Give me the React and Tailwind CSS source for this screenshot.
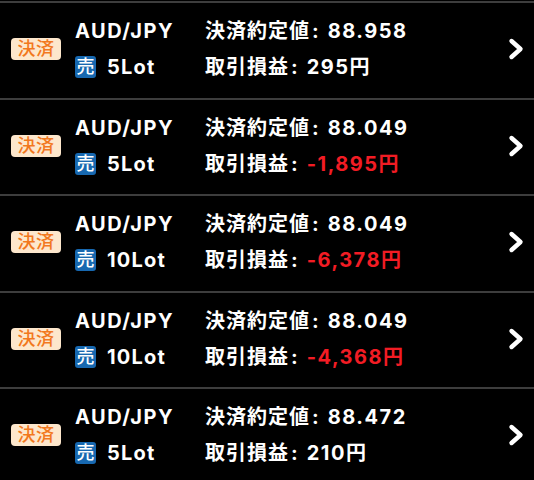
import React from "react";

const rows = [
  { lot: "5Lot", price: "88.958", pl: "295円", neg: false },
  { lot: "5Lot", price: "88.049", pl: "-1,895円", neg: true },
  { lot: "10Lot", price: "88.049", pl: "-6,378円", neg: true },
  { lot: "10Lot", price: "88.049", pl: "-4,368円", neg: true },
  { lot: "5Lot", price: "88.472", pl: "210円", neg: false },
];

const font = { fontFamily: 'Inter, "Noto Sans CJK JP", sans-serif' };

function Chevron() {
  return (
    <svg width="19" height="24" viewBox="0 0 19 24" className="block">
      <path d="M4.5 4 L13.5 12 L4.5 20" fill="none" stroke="white" strokeWidth="4.4" strokeLinecap="round" strokeLinejoin="round" />
    </svg>
  );
}

function Row({ r }) {
  return (
    <div className="h-[96.5px] border-t-2 border-[#3d3d3d] flex items-center pb-[2px]">
      <div className="shrink-0 ml-[11px] w-[50px] h-[22px] rounded-[4px] bg-[#fde7cc] text-[#f2781e] text-[18px] leading-[22px] flex items-center justify-center tracking-[0.5px] font-medium">
        決済
      </div>
      <div className="shrink-0 ml-[14px] w-[130px] flex flex-col">
        <div className="h-[36px] flex items-center text-white font-bold text-[20px] tracking-[1.5px]">AUD/JPY</div>
        <div className="h-[36px] flex items-center">
          <span className="shrink-0 w-[21px] h-[22px] rounded-[3px] bg-[#1768b0] text-white text-[18px] leading-[22px] flex items-center justify-center font-medium">売</span>
          <span className="ml-[11px] text-white font-bold text-[20px] tracking-[1.2px]">{r.lot}</span>
        </div>
      </div>
      <div className="flex flex-col flex-1">
        <div className="h-[36px] flex items-center text-white font-bold text-[20px] tracking-[1px]">
          <span>決済約定値</span>
          <span className="ml-[2px]">:</span>
          <span className="ml-[8px] tracking-[1.5px]">{r.price}</span>
        </div>
        <div className="h-[36px] flex items-center text-white font-bold text-[20px] tracking-[1px]">
          <span>取引損益</span>
          <span className="ml-[2px]">:</span>
          <span className={"ml-[8px] tracking-[1.5px] " + (r.neg ? "text-[#f21c24]" : "text-white")}>{r.pl}</span>
        </div>
      </div>
      <div className="shrink-0 mr-[8px]">
        <Chevron />
      </div>
    </div>
  );
}

export default function App() {
  return (
    <div className="w-[534px] h-[480px] bg-black overflow-hidden pt-[1px]" style={font}>
      {rows.map((r, i) => (
        <Row key={i} r={r} />
      ))}
    </div>
  );
}
